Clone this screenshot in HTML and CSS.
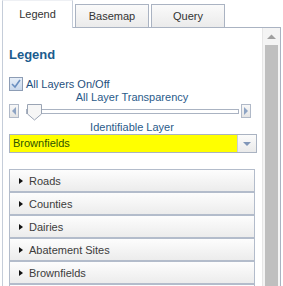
FILE: index.html
```html
<!DOCTYPE html>
<html>
<head>
    <title>Legend</title>
    <link rel="stylesheet" href="styles.css">
</head>
<body>
    <div class="wrap">
        <div class="tabs">
            <div class="tab active">Legend</div>
            <div class="tab">Basemap</div>
            <div class="tab">Query</div>
        </div>
        <div class="panel">
            <div class="content">
                <h2 class="title">Legend</h2>

                <label class="checkRow">
                    <span class="checkBox">
                        <svg width="12" height="12" viewBox="0 0 12 12">
                            <path d="M2 6 L5 9 L10 2" style="fill:none;stroke:#6a8fc0;stroke-width:1.6"/>
                        </svg>
                    </span>
                    All Layers On/Off
                </label>

                <div class="caption">All Layer Transparency</div>
                <div class="slider">
                    <div class="arrowBtn">
                        <svg width="8" height="12" viewBox="0 0 8 12"><path d="M6 2 L2 6 L6 10 Z" fill="#8ea4c4"/></svg>
                    </div>
                    <div class="track">
                        <div class="thumb">
                            <svg width="15" height="17" viewBox="0 0 15 17">
                                <path d="M0.5 0.5 H14.5 V10 L7.5 16 L0.5 10 Z" style="fill:#f6f6f6;stroke:#9aa4b4"/>
                            </svg>
                        </div>
                    </div>
                    <div class="arrowBtn">
                        <svg width="8" height="12" viewBox="0 0 8 12"><path d="M2 2 L6 6 L2 10 Z" fill="#8ea4c4"/></svg>
                    </div>
                </div>

                <div class="caption">Identifiable Layer</div>
                <div class="select">
                    <div class="selectText">Brownfields</div>
                    <div class="selectBtn">
                        <svg width="10" height="6" viewBox="0 0 10 6"><path d="M1 1 H9 L5 5 Z" fill="#8096b8"/></svg>
                    </div>
                </div>

                <div class="layers">
                    <div class="layer"><span class="arrow"></span>Roads</div>
                    <div class="layer"><span class="arrow"></span>Counties</div>
                    <div class="layer"><span class="arrow"></span>Dairies</div>
                    <div class="layer"><span class="arrow"></span>Abatement Sites</div>
                    <div class="layer"><span class="arrow"></span>Brownfields</div>
                    <div class="layer"></div>
                </div>
            </div>
            <div class="scrollbar">
                <div class="scrollUp">
                    <svg width="9" height="5" viewBox="0 0 9 5"><path d="M0 5 L4.5 0.5 L9 5 Z" fill="#a0a0a0"/></svg>
                </div>
                <div class="scrollThumb"></div>
            </div>
        </div>
    </div>
</body>
</html>
```

FILE: styles.css
```css
body {
    margin: 0;
    font-family: "Liberation Sans", Arial, sans-serif;
    font-size: 11px;
    color: #333;
    background: #fff;
    overflow: hidden;
}

.wrap {
    margin-left: 2px;
    width: 279px;
    height: 286px;
    display: flex;
    flex-direction: column;
}

.tabs {
    display: flex;
    gap: 2px;
    height: 27px;
    align-items: flex-end;
    flex-shrink: 0;
}

.tab {
    width: 72px;
    height: 22px;
    border: 1px solid #aab3c2;
    border-bottom: none;
    background: linear-gradient(#fafafa, #ebebeb);
    color: #333;
    display: flex;
    align-items: center;
    justify-content: center;
    position: relative;
}

.tab.active {
    width: 71px;
    height: 28px;
    margin-bottom: -1px;
    background: #fff;
    border-color: #c5cdd9;
    border-top-color: #eef0f4;
    z-index: 1;
    padding-bottom: 1px;
    box-sizing: border-box;
}

.panel {
    flex: 1;
    display: flex;
    border: 1px solid #aab3c2;
    border-left-color: #c5cdd9;
    border-bottom: none;
    overflow: hidden;
}

.content {
    flex: 1;
    padding-left: 6px;
    padding-right: 5px;
    display: flex;
    flex-direction: column;
    overflow: hidden;
}

.content > * {
    flex-shrink: 0;
}

.title {
    margin: 19px 0 0 0;
    font-size: 13px;
    line-height: 16px;
    font-weight: bold;
    color: #1b5c8e;
}

.checkRow {
    margin-top: 14px;
    display: flex;
    align-items: center;
    gap: 3px;
    height: 14px;
    color: #1f4f7d;
}

.checkBox {
    width: 12px;
    height: 12px;
    border: 1px solid #8d9db5;
    background: linear-gradient(#e6eef8, #c9d8ec);
    display: flex;
}

.caption {
    height: 13px;
    line-height: 13px;
    text-align: center;
    color: #2a5b8a;
    padding-right: 2px;
}

.slider {
    display: flex;
    align-items: flex-start;
    height: 17px;
    width: 242px;
}

.arrowBtn {
    width: 8px;
    height: 12px;
    border: 1px solid #b0b9c8;
    background: linear-gradient(#f8f8f8, #e4e4e4);
    display: flex;
}

.track {
    flex: 1;
    margin: 5px 2px 0 7px;
    height: 3px;
    border: 1px solid #aab3c2;
    background: #fff;
    position: relative;
}

.thumb {
    position: absolute;
    left: 0;
    top: -6px;
    width: 15px;
    height: 17px;
}

.select {
    height: 17px;
    width: 246px;
    border: 1px solid #aab3c2;
    display: flex;
}

.selectText {
    flex: 1;
    background: #ffff00;
    color: #2d5400;
    padding-left: 3px;
    line-height: 17px;
}

.selectBtn {
    width: 18px;
    border-left: 1px solid #c8ced8;
    background: linear-gradient(#fbfbfb, #eaeaea);
    display: flex;
    align-items: center;
    justify-content: center;
}

.layers {
    margin-top: 16px;
    width: 246px;
    display: flex;
    flex-direction: column;
}

.layer {
    height: 21px;
    border: 1px solid #b3bccb;
    background: linear-gradient(#fdfdfd, #ececec);
    display: flex;
    align-items: center;
    padding-left: 9px;
    color: #3c3c3c;
    flex-shrink: 0;
}

.arrow {
    width: 0;
    height: 0;
    border-top: 3.5px solid transparent;
    border-bottom: 3.5px solid transparent;
    border-left: 4px solid #111;
    margin-right: 6px;
}

.scrollbar {
    width: 17px;
    border-left: 1px solid #e6e6e6;
    background: #f4f4f4;
    display: flex;
    flex-direction: column;
    align-items: center;
}

.scrollUp {
    height: 17px;
    display: flex;
    align-items: center;
    justify-content: center;
}

.scrollThumb {
    flex: 1;
    width: 13px;
    background: #bfbfbf;
}
```
